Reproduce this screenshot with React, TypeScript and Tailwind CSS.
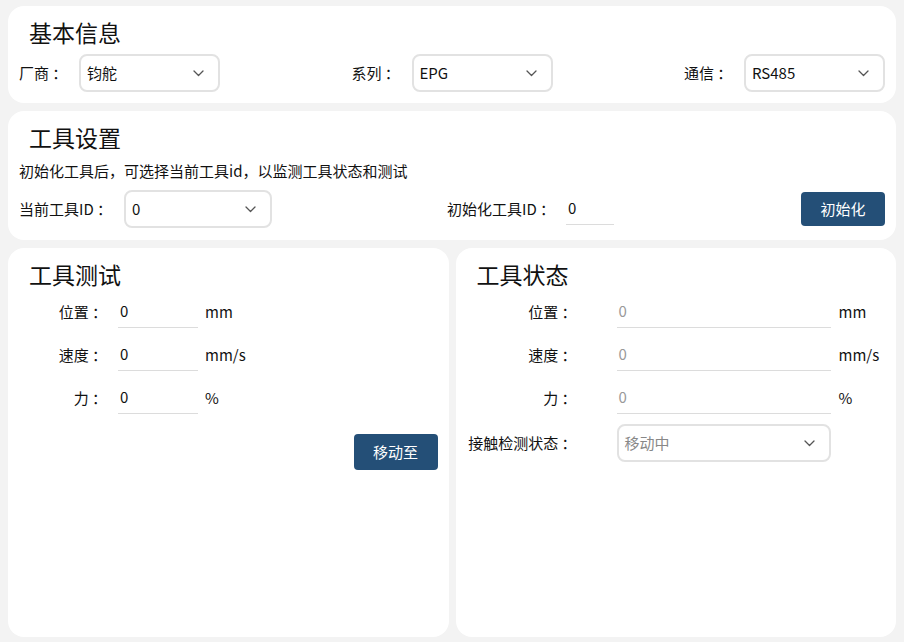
const font = { fontFamily: '"Noto Sans CJK SC", "Noto Sans", sans-serif' };

function Chevron() {
  return (
    <svg width="11" height="7" viewBox="0 0 11 7" fill="none">
      <path d="M1 1l4.5 4.5L10 1" stroke="#555" strokeWidth="1.3" strokeLinecap="round" strokeLinejoin="round" />
    </svg>
  );
}

function Select({ value, width, muted }: { value: string; width: string; muted?: boolean }) {
  return (
    <div
      className={`flex h-[38px] items-center justify-between rounded-lg border-2 border-[#e2e2e2] bg-white pl-[6px] pr-[14px] ${width}`}
    >
      <span className={muted ? "text-[#888]" : "text-[#111]"}>{value}</span>
      <Chevron />
    </div>
  );
}

function Field({ value, width, muted }: { value: string; width: string; muted?: boolean }) {
  return (
    <div className={`flex h-[32px] items-center border-b border-[#dcdcdc] pl-[2px] ${width}`}>
      <span className={muted ? "text-[#999]" : "text-[#111]"}>{value}</span>
    </div>
  );
}

function Title({ children }: { children: string }) {
  return <h2 className="ml-[10px] h-[32px] text-[23px] leading-[32px] text-[#111]">{children}</h2>;
}

function Group({ label, value }: { label: string; value: string }) {
  return (
    <div className="flex items-center">
      <span className="w-[60px] whitespace-nowrap">{label}</span>
      <Select value={value} width="w-[141px]" />
    </div>
  );
}

const testRows = [
  { label: "位置 ：", unit: "mm" },
  { label: "速度 ：", unit: "mm/s" },
  { label: "力 ：", unit: "%" },
];

export default function App() {
  return (
    <div className="flex min-h-[642px] flex-col gap-[8px] bg-[#f3f3f3] px-[8px] pt-[6px] pb-[5px] text-[15px] text-[#111]" style={font}>
      <section className="rounded-2xl bg-white px-[11px] pt-[10px] pb-[11px]">
        <Title>基本信息</Title>
        <div className="mt-[6px] flex items-center justify-between">
          <Group label="厂商 ：" value="钧舵" />
          <Group label="系列 ：" value="EPG" />
          <Group label="通信 ：" value="RS485" />
        </div>
      </section>

      <section className="rounded-2xl bg-white px-[11px] pt-[10px] pb-[12px]">
        <Title>工具设置</Title>
        <p className="mt-[8px] h-[20px] whitespace-nowrap leading-[20px]">初始化工具后，可选择当前工具id，以监测工具状态和测试</p>
        <div className="mt-[9px] flex items-center">
          <span className="w-[105px] whitespace-nowrap">当前工具ID ：</span>
          <Select value="0" width="w-[148px]" />
          <span className="ml-[175px] w-[119px] whitespace-nowrap">初始化工具ID ：</span>
          <Field value="0" width="w-[48px]" />
          <button className="ml-auto h-[34px] w-[84px] rounded bg-[#244f77] text-white">初始化</button>
        </div>
      </section>

      <div className="flex flex-1 gap-[7px]">
        <section className="flex-1 rounded-2xl bg-white px-[11px] pt-[10px]">
          <Title>工具测试</Title>
          <div className="mt-[6px] flex flex-col gap-[11px]">
            {testRows.map((r) => (
              <div key={r.label} className="flex h-[32px] items-center">
                <span className="w-[88px] whitespace-nowrap text-right">{r.label}</span>
                <Field value="0" width="ml-[11px] w-[80px]" />
                <span className="ml-[7px]">{r.unit}</span>
              </div>
            ))}
          </div>
          <div className="mt-[20px] flex justify-end">
            <button className="h-[36px] w-[84px] rounded bg-[#244f77] text-white">移动至</button>
          </div>
        </section>

        <section className="flex-1 rounded-2xl bg-white px-[11px] pt-[10px]">
          <Title>工具状态</Title>
          <div className="mt-[6px] flex flex-col gap-[11px]">
            {testRows.map((r) => (
              <div key={r.label} className="flex h-[32px] items-center">
                <span className="w-[110px] whitespace-nowrap text-right">{r.label}</span>
                <Field value="0" width="ml-[40px] w-[214px]" muted />
                <span className="ml-[8px]">{r.unit}</span>
              </div>
            ))}
            <div className="-mt-[1px] flex items-center">
              <span className="w-[110px] whitespace-nowrap text-right">接触检测状态 ：</span>
              <div className="ml-[40px]">
                <Select value="移动中" width="w-[214px]" muted />
              </div>
            </div>
          </div>
        </section>
      </div>
    </div>
  );
}
